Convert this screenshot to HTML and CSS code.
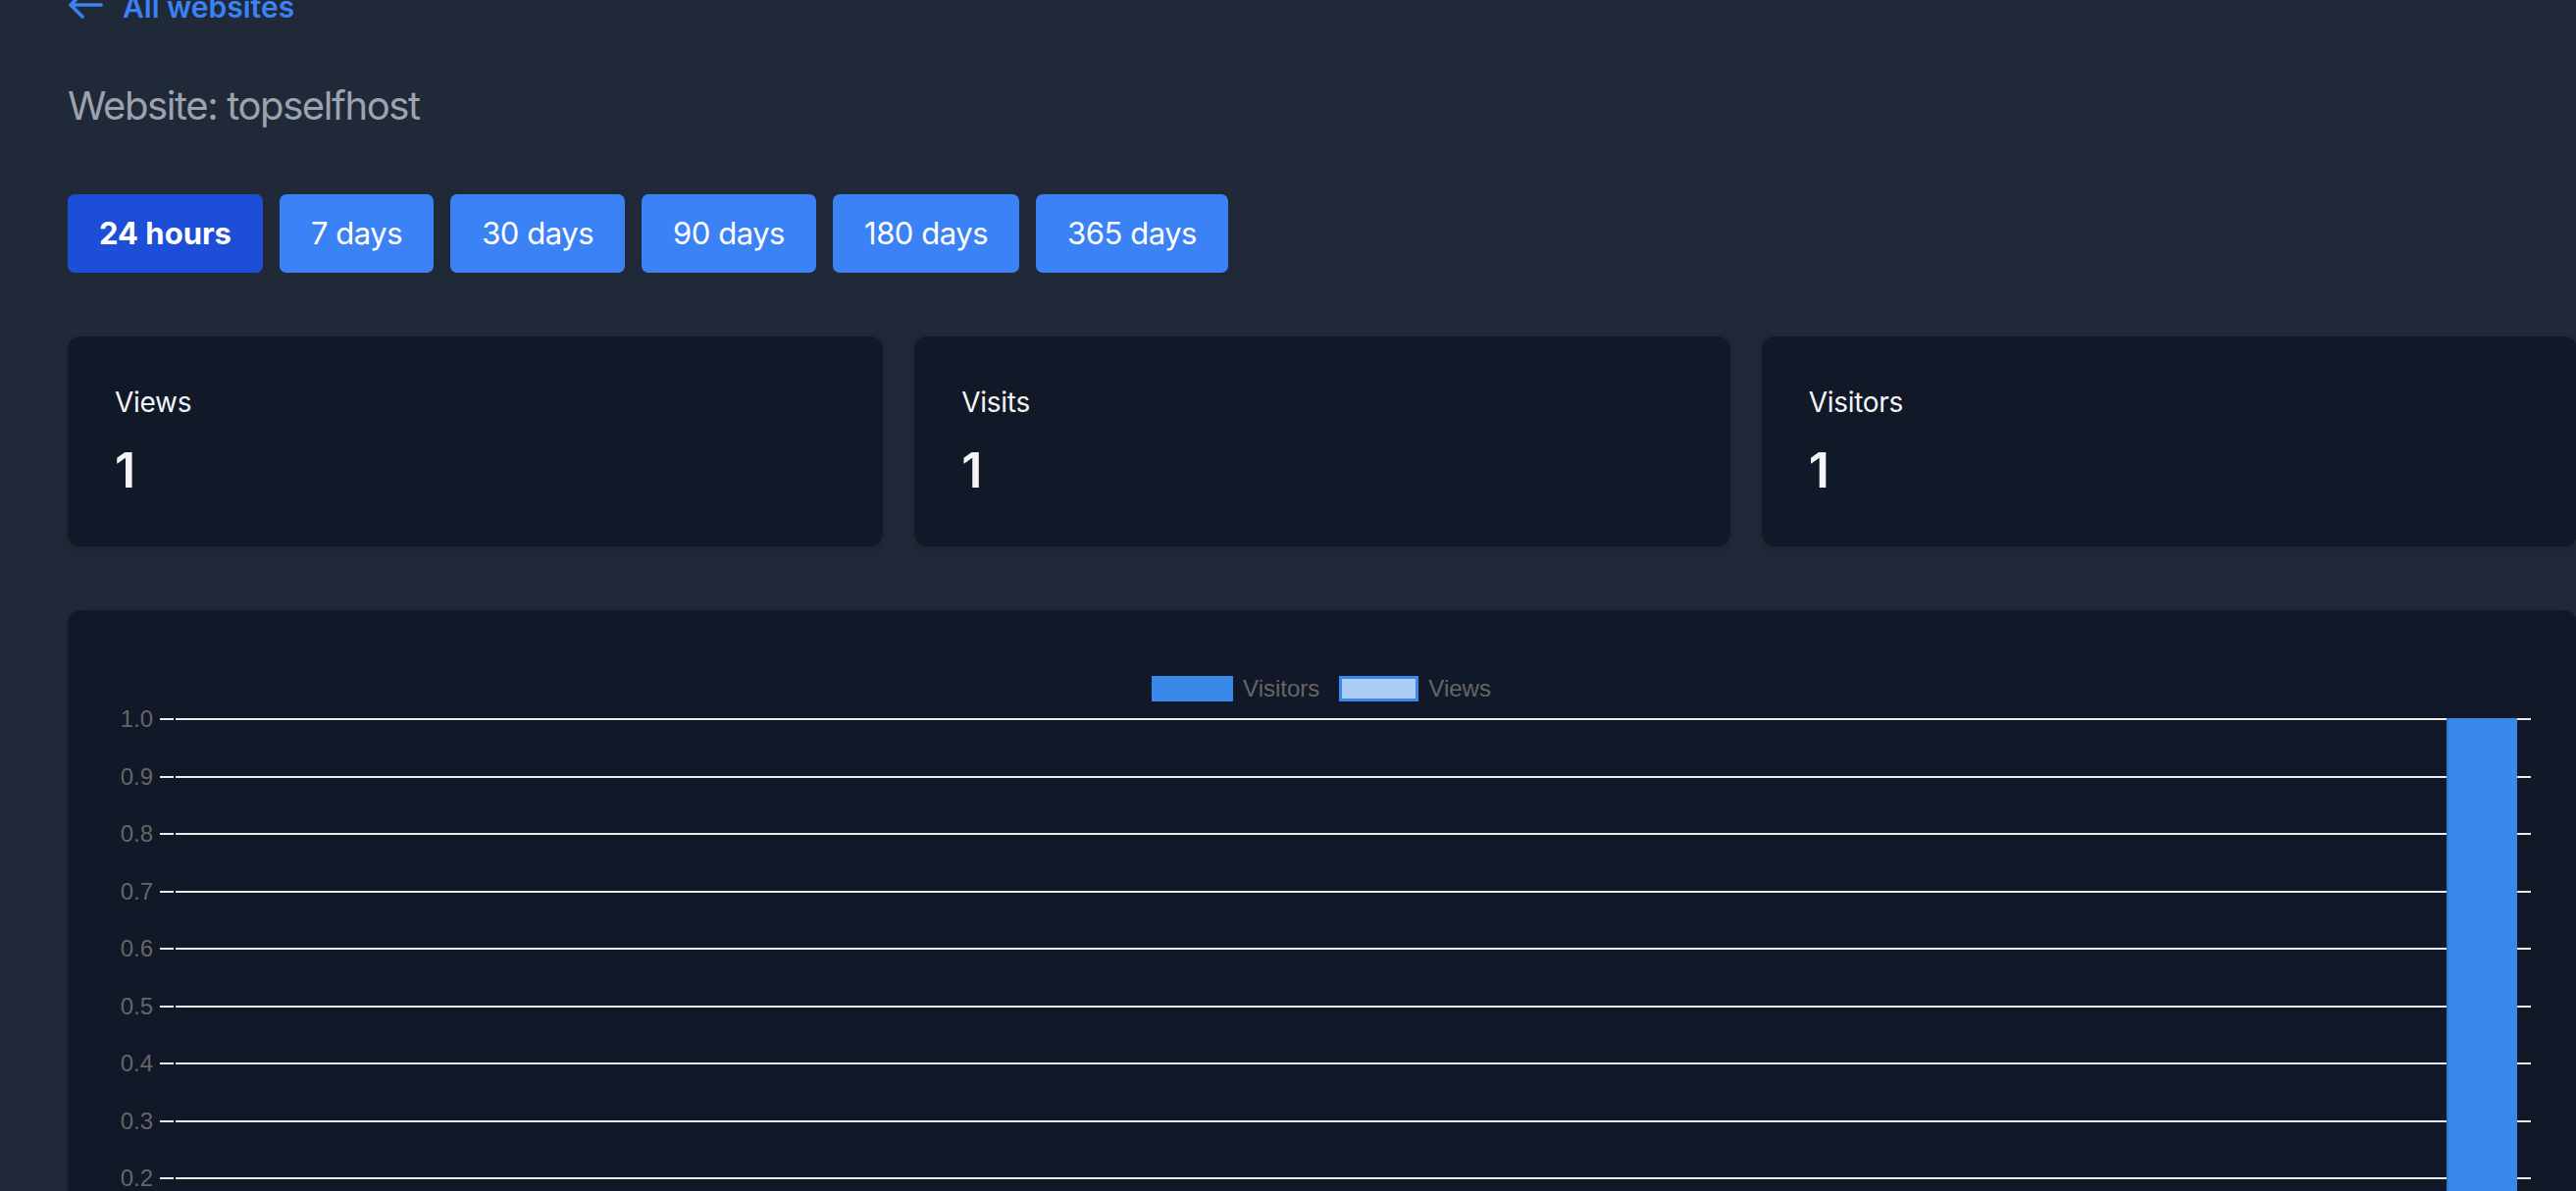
FILE: index.html
```html
<!DOCTYPE html>
<html lang="en">
<head>
<meta charset="utf-8">
<title>Website: topselfhost</title>
<link rel="stylesheet" href="styles.css">
</head>
<body>
<main class="page">
  <a class="back-link" href="#">
    <svg class="back-icon" viewBox="0 0 36 30" width="36" height="30" aria-hidden="true">
      <path d="M15 3 L3 15 L15 27 M3 15 H34" fill="none" stroke="currentColor" stroke-width="3.6" stroke-linecap="round" stroke-linejoin="round"/>
    </svg>
    <span>All websites</span>
  </a>

  <h1 class="title">Website: topselfhost</h1>

  <div class="ranges">
    <button class="range range-active">24 hours</button>
    <button class="range">7 days</button>
    <button class="range">30 days</button>
    <button class="range">90 days</button>
    <button class="range">180 days</button>
    <button class="range">365 days</button>
  </div>

  <section class="stats">
    <div class="stat">
      <div class="stat-label">Views</div>
      <div class="stat-value">1</div>
    </div>
    <div class="stat">
      <div class="stat-label">Visits</div>
      <div class="stat-value">1</div>
    </div>
    <div class="stat">
      <div class="stat-label">Visitors</div>
      <div class="stat-value">1</div>
    </div>
  </section>

  <section class="chart-card">
    <div class="legend">
      <span class="legend-item"><span class="swatch swatch-visitors"></span>Visitors</span>
      <span class="legend-item"><span class="swatch swatch-views"></span>Views</span>
    </div>
    <div class="plot">
      <div class="rows">
        <div class="row"><span class="tick-label">1.0</span><span class="tick"></span><span class="gridline"></span></div>
        <div class="row"><span class="tick-label">0.9</span><span class="tick"></span><span class="gridline"></span></div>
        <div class="row"><span class="tick-label">0.8</span><span class="tick"></span><span class="gridline"></span></div>
        <div class="row"><span class="tick-label">0.7</span><span class="tick"></span><span class="gridline"></span></div>
        <div class="row"><span class="tick-label">0.6</span><span class="tick"></span><span class="gridline"></span></div>
        <div class="row"><span class="tick-label">0.5</span><span class="tick"></span><span class="gridline"></span></div>
        <div class="row"><span class="tick-label">0.4</span><span class="tick"></span><span class="gridline"></span></div>
        <div class="row"><span class="tick-label">0.3</span><span class="tick"></span><span class="gridline"></span></div>
        <div class="row"><span class="tick-label">0.2</span><span class="tick"></span><span class="gridline"></span></div>
        <div class="row"><span class="tick-label">0.1</span><span class="tick"></span><span class="gridline"></span></div>
        <div class="row row-last"><span class="tick-label">0.0</span><span class="tick"></span><span class="gridline"></span></div>
      </div>
      <div class="bars">
        <div class="bar-slot"></div><div class="bar-slot"></div><div class="bar-slot"></div><div class="bar-slot"></div>
        <div class="bar-slot"></div><div class="bar-slot"></div><div class="bar-slot"></div><div class="bar-slot"></div>
        <div class="bar-slot"></div><div class="bar-slot"></div><div class="bar-slot"></div><div class="bar-slot"></div>
        <div class="bar-slot"></div><div class="bar-slot"></div><div class="bar-slot"></div><div class="bar-slot"></div>
        <div class="bar-slot"></div><div class="bar-slot"></div><div class="bar-slot"></div><div class="bar-slot"></div>
        <div class="bar-slot"></div><div class="bar-slot"></div><div class="bar-slot"></div>
        <div class="bar-slot"><div class="bar" style="height:100%"></div></div>
      </div>
    </div>
  </section>
</main>
</body>
</html>
```

FILE: styles.css
```css
* { box-sizing: border-box; }

html, body {
  margin: 0;
  padding: 0;
  background: #1f2937;
  overflow: hidden;
}

body {
  font-family: Inter, "Noto Sans", sans-serif;
  color: #f3f4f6;
}

.page {
  width: 2627px;
  padding-left: 69px;
  display: flex;
  flex-direction: column;
}

.back-link {
  margin-top: -13px;
  display: flex;
  align-items: center;
  gap: 20px;
  color: #3b82f6;
  text-decoration: none;
  font-size: 30px;
  line-height: 40px;
  font-weight: 600;
  height: 40px;
}

.back-icon {
  display: block;
  flex: none;
  margin-top: -4px;
}

.title {
  margin: 57px 0 0 0;
  font-size: 40px;
  line-height: 48px;
  font-weight: 400;
  color: #9ca3af;
  letter-spacing: -0.035em;
}

.ranges {
  margin-top: 66px;
  display: flex;
  gap: 17px;
}

.range {
  height: 80px;
  padding: 0 32px;
  border: none;
  border-radius: 7px;
  background: #3b82f6;
  color: #ffffff;
  font-family: Inter, "Noto Sans", sans-serif;
  font-size: 31px;
  font-weight: 400;
  letter-spacing: -0.015em;
  line-height: 80px;
}

.range-active {
  background: #1d4ed8;
  font-weight: 700;
  letter-spacing: 0;
}

.stats {
  margin-top: 65px;
  display: grid;
  grid-template-columns: repeat(3, 1fr);
  gap: 32px;
}

.stat {
  background: #111827;
  border-radius: 13px;
  padding: 47px 48px 48px;
  box-shadow: 0 4px 10px rgba(0, 0, 0, 0.12);
}

.stat-label {
  font-size: 28px;
  line-height: 40px;
  letter-spacing: -0.01em;
  color: #f3f4f6;
}

.stat-value {
  margin-top: 19px;
  font-size: 50px;
  line-height: 60px;
  font-weight: 600;
  color: #f3f4f6;
}

.chart-card {
  margin-top: 65px;
  background: #111827;
  border-radius: 13px;
  padding: 67px 47px 200px 48px;
  box-shadow: 0 4px 10px rgba(0, 0, 0, 0.12);
  font-family: "Liberation Sans", Arial, sans-serif;
}

.legend {
  display: flex;
  justify-content: center;
  gap: 20px;
  height: 26px;
  margin-left: -3px;
  color: #666666;
  font-size: 24px;
  line-height: 26px;
}

.legend-item {
  display: flex;
  align-items: center;
  gap: 10px;
}

.swatch {
  display: block;
  width: 83px;
  height: 26px;
}

.swatch-visitors {
  background: #3a88ea;
}

.swatch-views {
  width: 81px;
  background: #abcdf8;
  border: 3px solid #3a88ea;
}

.plot {
  margin-top: 17px;
  position: relative;
}

.rows {
  display: flex;
  flex-direction: column;
}

.row {
  height: 58.5px;
  display: flex;
  align-items: flex-start;
}

.row-last {
  height: 2px;
}

.tick-label {
  width: 39px;
  text-align: right;
  color: #666666;
  font-size: 24px;
  line-height: 28px;
  transform: translateY(-13px);
  margin-right: 7px;
}

.tick {
  width: 14px;
  height: 2px;
  background: #ebebeb;
  margin-right: 2px;
}

.gridline {
  flex: 1;
  height: 2px;
  background: #ebebeb;
}

.bars {
  position: absolute;
  left: 62px;
  right: 0;
  top: 0;
  height: 587px;
  display: grid;
  grid-template-columns: repeat(24, 1fr);
  align-items: end;
}

.bar-slot {
  height: 100%;
  display: flex;
  justify-content: center;
  align-items: flex-end;
}

.bar {
  width: 72%;
  background: #3a88ea;
  box-shadow: inset 2px 0 0 #2f78d6;
}
```
